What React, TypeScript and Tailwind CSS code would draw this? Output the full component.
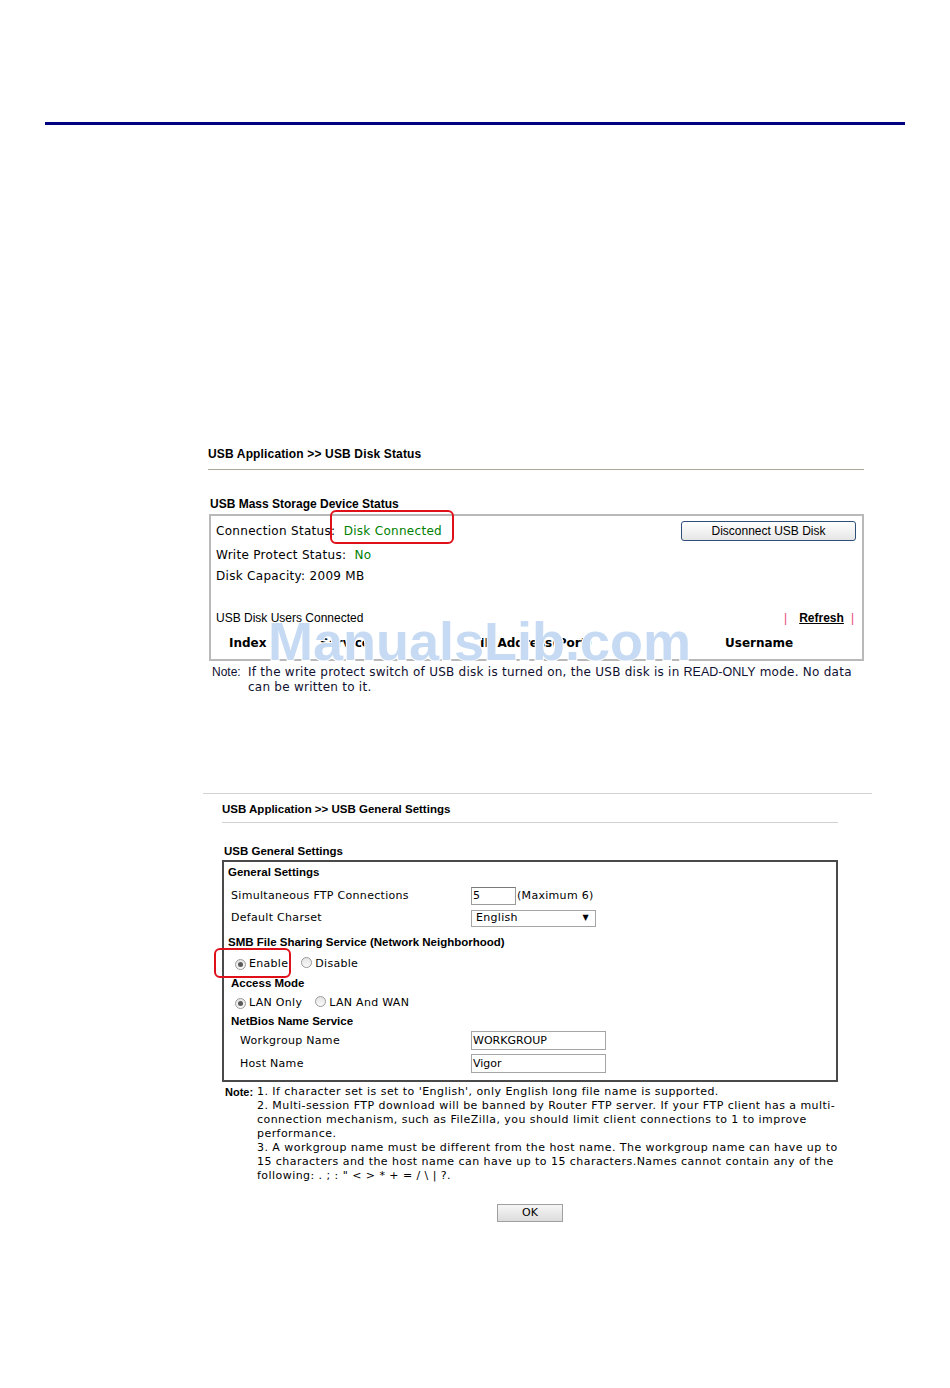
import React from 'react';

const verdana = "font-['DejaVu_Sans',Verdana,sans-serif]";
const tahoma = "font-['Liberation_Sans',Arial,sans-serif]";

function Radio({ checked }: { checked?: boolean }) {
  return (
    <span className="inline-flex w-[11px] h-[11px] rounded-full border border-[#9a9a9a] bg-gradient-to-b from-[#e4e4e4] to-[#fafafa] items-center justify-center">
      {checked && <span className="w-[5px] h-[5px] rounded-full bg-[#5a5a5a]" />}
    </span>
  );
}

function DiskStatus() {
  return (
    <div className="mt-[322px] ml-[208px] w-[656px] text-black">
      <div className={`${tahoma} text-[12px] leading-[14px] font-bold tracking-[0.15px] pb-[8px] border-b border-[#aca899]`}>
        USB Application &gt;&gt; USB Disk Status
      </div>
      <div className={`${tahoma} text-[12px] leading-[14px] font-bold mt-[27px] ml-[2px]`}>
        USB Mass Storage Device Status
      </div>
      <div className={`${verdana} mt-[3px] ml-[1px] w-[655px] border-2 border-[#b9b9b9] pl-[5px] pr-[6px] pt-[5px] pb-[9px] text-[12px] leading-[14px] tracking-[0.3px]`}>
        <div className="flex items-center justify-between h-[20px]">
          <span>
            Connection Status:&nbsp;&nbsp;<span className="text-[#008000]">Disk Connected</span>
          </span>
          <button className={`${tahoma} w-[175px] h-[20px] rounded-[3px] border border-[#2f4f78] bg-gradient-to-b from-white to-[#e6e6e6] text-[12px] tracking-normal`}>
            Disconnect USB Disk
          </button>
        </div>
        <div className="mt-[7px]">
          Write Protect Status:&nbsp; <span className="text-[#008000]">No</span>
        </div>
        <div className="mt-[7px]">Disk Capacity: 2009 MB</div>
        <div className={`${tahoma} mt-[28px] flex items-center justify-between tracking-normal`}>
          <span>USB Disk Users Connected</span>
          <span className="flex items-center mr-[2px]">
            <span className="text-[#e8457a]">|</span>
            <span className="ml-[12px] font-bold underline">Refresh</span>
            <span className="ml-[7px] text-[#e8457a]">|</span>
          </span>
        </div>
        <div className="mt-[11px] flex font-bold tracking-normal">
          <span className="ml-[13px] w-[91px]">Index</span>
          <span className="w-[160px]">Service</span>
          <span className="w-[245px]">IP Address(Port)</span>
          <span>Username</span>
        </div>
      </div>
      <div className={`${verdana} mt-[4px] ml-[4px] flex text-[12px] leading-[15px] tracking-[0.25px] text-[#101030]`}>
        <span className={`${tahoma} w-[36px] shrink-0 text-[12px] tracking-normal`}>Note:</span>
        <div className="whitespace-nowrap">
          <div>
            If the write protect switch of USB disk is turned on, the USB disk is in{' '}
            <span className={`${tahoma} text-[12.5px] tracking-normal`}>READ-ONLY</span> mode. No data
          </div>
          <div>can be written to it.</div>
        </div>
      </div>
    </div>
  );
}

function Row({ label, indent, h, children }: { label: string; indent: string; h: string; children: React.ReactNode }) {
  return (
    <div className={`flex items-center ${h}`}>
      <div className={`w-[247px] shrink-0 ${indent}`}>{label}</div>
      {children}
    </div>
  );
}

function GeneralSettings() {
  return (
    <div className="mt-[98px]">
      <div className="ml-[203px] w-[669px] border-t border-[#d4d4d4]" />
      <div className="ml-[222px] w-[616px] text-black">
        <div className={`${tahoma} mt-[8px] text-[11.5px] leading-[14px] font-bold pb-[6px] border-b border-[#d0d0d0]`}>
          USB Application &gt;&gt; USB General Settings
        </div>
        <div className={`${tahoma} mt-[21px] ml-[2px] text-[11.5px] leading-[14px] font-bold`}>
          USB General Settings
        </div>
        <div className={`${verdana} mt-[2px] border-2 border-[#4a4a4a] pb-[5px] text-[11px] leading-[14px] tracking-[0.3px]`}>
          <div className={`${tahoma} h-[20px] flex items-center pl-[4px] text-[11.5px] font-bold tracking-normal`}>General Settings</div>
          <div className="mt-[3px]">
            <Row label="Simultaneous FTP Connections" indent="pl-[7px]" h="h-[22px]">
              <span className="w-[45px] h-[18px] border border-[#9a9a9a] border-t-[#7a7a7a] pl-[1px] flex items-center">5</span>
              <span className="ml-[1px]">(Maximum 6)</span>
            </Row>
            <Row label="Default Charset" indent="pl-[7px]" h="h-[22px]">
              <span className="w-[125px] h-[17px] border border-[#a5a5a5] flex items-center justify-between pl-[4px] pr-[6px]">
                <span>English</span>
                <span className="text-[8px]">▼</span>
              </span>
            </Row>
          </div>
          <div className={`${tahoma} mt-[3px] h-[20px] flex items-center pl-[4px] text-[11.5px] font-bold tracking-normal`}>
            SMB File Sharing Service (Network Neighborhood)
          </div>
          <div className="mt-[2px] h-[20px] flex items-center pl-[11px]">
            <Radio checked />
            <span className="ml-[3px]">Enable</span>
            <span className="ml-[13px]"><Radio /></span>
            <span className="ml-[3px]">Disable</span>
          </div>
          <div className={`${tahoma} h-[18px] flex items-center pl-[7px] text-[11.5px] font-bold tracking-normal`}>Access Mode</div>
          <div className="h-[22px] flex items-center pl-[11px]">
            <Radio checked />
            <span className="ml-[3px]">LAN Only</span>
            <span className="ml-[13px]"><Radio /></span>
            <span className="ml-[3px]">LAN And WAN</span>
          </div>
          <div className={`${tahoma} h-[14px] flex items-center pl-[7px] text-[11.5px] font-bold tracking-normal`}>NetBios Name Service</div>
          <div className="mt-[1px]">
            <Row label="Workgroup Name" indent="pl-[16px]" h="h-[23px]">
              <span className="w-[135px] h-[19px] border border-[#a5a5a5] pl-[1px] flex items-center tracking-normal">WORKGROUP</span>
            </Row>
            <Row label="Host Name" indent="pl-[16px]" h="h-[23px]">
              <span className="w-[135px] h-[19px] border border-[#a5a5a5] pl-[1px] flex items-center tracking-normal">Vigor</span>
            </Row>
          </div>
        </div>
        <div className={`${verdana} mt-[3px] ml-[3px] flex text-[11px] leading-[14px] tracking-[0.45px] whitespace-nowrap`}>
          <span className={`${tahoma} w-[32px] shrink-0 font-bold text-[11px] tracking-normal`}>Note:</span>
          <div>
            <div>1. If character set is set to 'English', only English long file name is supported.</div>
            <div>2. Multi-session FTP download will be banned by Router FTP server. If your FTP client has a multi-</div>
            <div>connection mechanism, such as FileZilla, you should limit client connections to 1 to improve</div>
            <div>performance.</div>
            <div>3. A workgroup name must be different from the host name. The workgroup name can have up to</div>
            <div>15 characters and the host name can have up to 15 characters.Names cannot contain any of the</div>
            <div>following: . ; : " &lt; &gt; * + = / \ | ?.</div>
          </div>
        </div>
        <div className="mt-[21px] flex justify-center">
          <button className={`${verdana} w-[66px] h-[18px] border border-[#a0a0a0] bg-gradient-to-b from-[#f6f6f6] to-[#dcdcdc] text-[11px] leading-[16px]`}>
            OK
          </button>
        </div>
      </div>
    </div>
  );
}

export default function App() {
  return (
    <div className="relative w-[950px] h-[1388px] bg-white overflow-hidden">
      <div className="pt-[122px]">
        <div className="ml-[45px] w-[860px] h-[3px] bg-[#000080]" />
      </div>
      <DiskStatus />
      <GeneralSettings />

      {/* annotation boxes */}
      <div className="absolute left-[330px] top-[510px] w-[124px] h-[34px] rounded-[6px] border-2 border-[#e0101a]" />
      <div className="absolute left-[214px] top-[948px] w-[77px] h-[30px] rounded-[6px] border-2 border-[#e0101a]" />

      {/* watermark */}
      <div className="absolute left-[268px] top-[614px] font-['Liberation_Sans',Arial,sans-serif] font-bold text-[54px] leading-[54px] text-[#c6dbf3] [-webkit-text-stroke:2px_white] [paint-order:stroke_fill] select-none pointer-events-none">
        ManualsLib.com
      </div>
    </div>
  );
}
